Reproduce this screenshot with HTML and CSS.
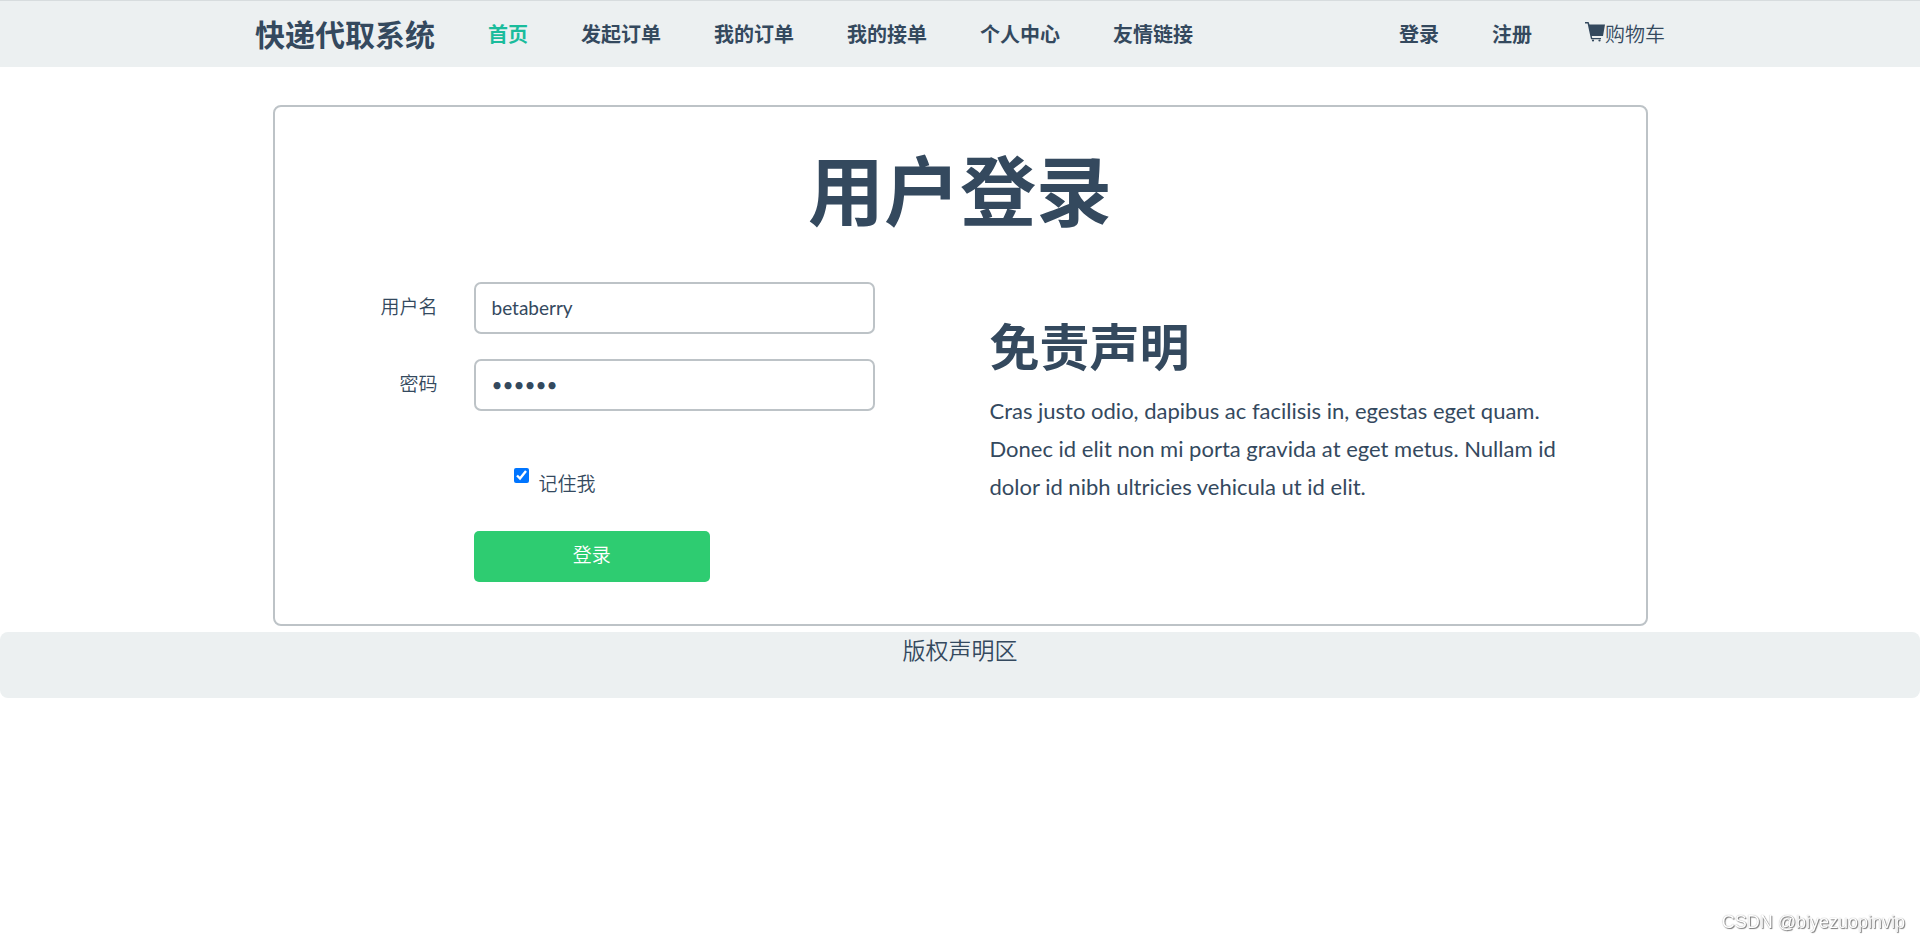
FILE: index.html
```html
<!DOCTYPE html>
<html lang="zh-CN">
<head>
<meta charset="utf-8">
<title>快递代取系统</title>
<link rel="stylesheet" href="styles.css">
</head>
<body>
<header class="topbar">
  <nav class="nav">
    <a class="brand" href="#">快递代取系统</a>
    <a class="active" href="#">首页</a>
    <a href="#">发起订单</a>
    <a href="#">我的订单</a>
    <a href="#">我的接单</a>
    <a href="#">个人中心</a>
    <a href="#">友情链接</a>
    <div class="account">
      <a href="#">登录</a>
      <a href="#">注册</a>
      <a class="cart" href="#"><svg class="cart-icon" viewBox="0 0 20 20" aria-hidden="true"><path d="M0 0h3.600l.9 2.500H20L18 14H6.800l.4 2H16v1.200H6L2.600 1.500H0z"/><circle cx="8" cy="18.500" r="1.100"/><circle cx="14.500" cy="18.500" r="1.100"/></svg>购物车</a>
    </div>
  </nav>
</header>
<main class="card">
  <h1 class="title">用户登录</h1>
  <div class="columns">
    <form class="form">
      <label for="user">用户名</label>
      <input class="field" id="user" type="text" value="betaberry">
      <label for="pass">密码</label>
      <input class="field" id="pass" type="password" value="123456">
      <div class="remember">
        <input class="tick" id="remember" type="checkbox" checked>
        <label for="remember">记住我</label>
      </div>
      <button class="submit" type="button">登录</button>
    </form>
    <section class="notice">
      <h2>免责声明</h2>
      <p>Cras justo odio, dapibus ac facilisis in, egestas eget quam. Donec id elit non mi porta gravida at eget metus. Nullam id dolor id nibh ultricies vehicula ut id elit.</p>
    </section>
  </div>
</main>
<footer class="footer">版权声明区</footer>
<div class="watermark">CSDN @biyezuopinvip</div>
</body>
</html>
```
FILE: styles.css
```css
* { box-sizing: border-box; }
body {
  margin: 0;
  background: #fff;
  color: #34495e;
  font-family: Lato, "Noto Sans CJK SC", sans-serif;
  font-size: 19px;
  line-height: 30px;
}
a { color: inherit; text-decoration: none; }
.topbar {
  background: #ecf0f1;
  border-top: 1px solid #d7dcde;
}
.nav {
  display: flex;
  align-items: center;
  gap: 53px;
  max-width: 1410px;
  margin: 0 auto;
  padding: 18px 0;
  font-size: 20px;
  font-weight: 700;
}
.brand { font-size: 30px; }
.active { color: #1abc9c; }
.account { display: flex; gap: 53px; margin-left: auto; }
.cart { display: flex; font-weight: 350; }
.cart-icon { width: 20px; height: 20px; margin-top: 3px; fill: currentColor; }
.card {
  max-width: 1375px;
  margin: 38px auto 6px;
  padding: 29px 64px 42px 0;
  border: 2px solid #bdc3c7;
  border-radius: 8px;
}
.title {
  margin: 0 0 36px 64px;
  font-size: 76px;
  line-height: 110px;
  text-align: center;
}
.columns {
  display: grid;
  grid-template-columns: 600fr 592fr;
  gap: 115px;
}
.form {
  display: grid;
  grid-template-columns: 163fr 401fr;
  column-gap: 36px;
  row-gap: 25px;
  font-weight: 350;
}
.form > label { padding-top: 10px; text-align: right; }
.field {
  width: 100%;
  height: 52px;
  padding: 0 16px 2px;
  border: 2px solid #bdc3c7;
  border-radius: 7px;
  background: #fff;
  color: inherit;
  font: 400 19px Lato, sans-serif;
}
.remember {
  grid-column: 2;
  display: flex;
  align-items: flex-start;
  gap: 10px;
  padding: 32px 0 7px 40px;
}
.remember label { padding-top: 1px; }
.tick { width: 15px; height: 15px; margin: 0; accent-color: #0075ff; }
.submit {
  grid-column: 2;
  width: 59%;
  height: 51px;
  padding: 0 0 3px;
  border: 0;
  border-radius: 5px;
  background: #2ecc71;
  color: #fff;
  font: inherit;
}
.notice h2 { margin: 30px 0 10px; font-size: 50px; line-height: 70px; }
.notice p { margin: 0; font-size: 22px; line-height: 38px; }
.footer {
  height: 66px;
  padding-top: 3px;
  border-radius: 8px;
  background: #ecf0f1;
  font-size: 23px;
  font-weight: 350;
  text-align: center;
}
.watermark {
  position: fixed;
  right: 15px;
  bottom: 5px;
  color: #fff;
  font-family: "Liberation Sans", sans-serif;
  font-size: 18px;
  text-shadow: 1px 1px 1px #777, 0 0 1px #999;
}
```
